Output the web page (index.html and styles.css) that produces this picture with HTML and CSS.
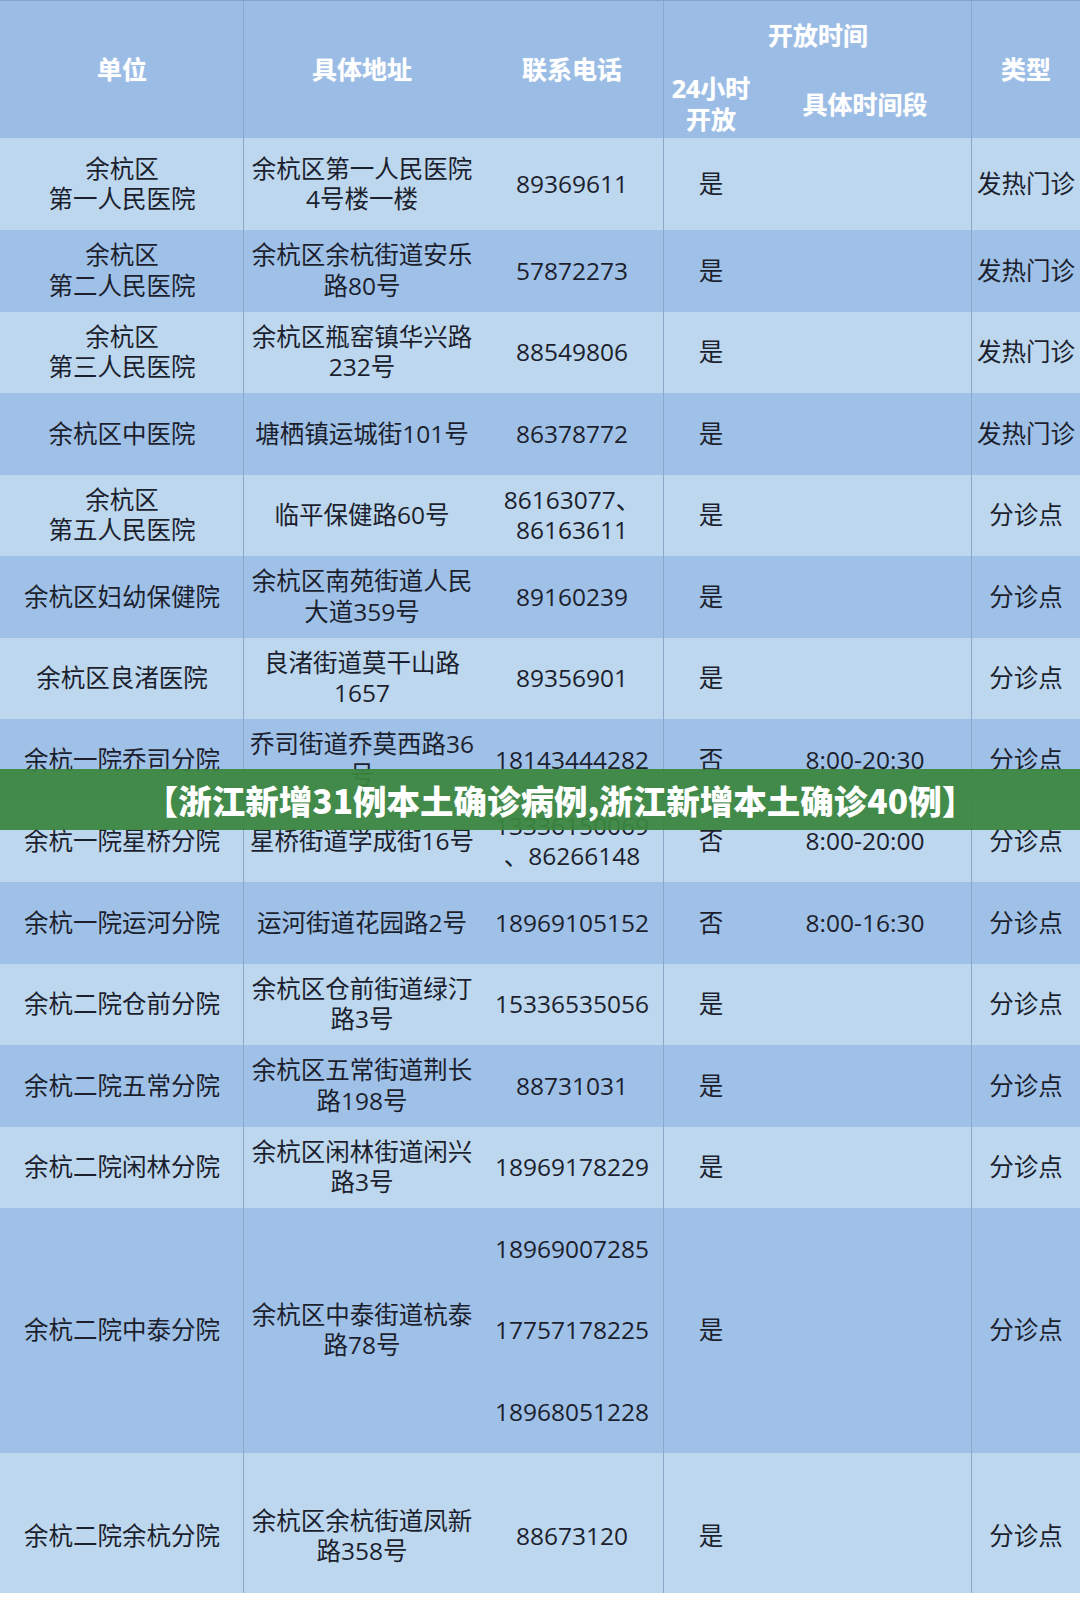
FILE: index.html
```html
<!DOCTYPE html>
<html lang="zh-CN">
<head>
<meta charset="utf-8">
<title>余杭区发热门诊及分诊点</title>
<link rel="stylesheet" href="styles.css">
</head>
<body>
<div class="page">
<table class="sheet">
<colgroup>
<col class="c-unit"><col class="c-addr"><col class="c-tel"><col class="c-24"><col class="c-time"><col class="c-type">
</colgroup>
<thead>
<tr class="h1">
<th rowspan="2" class="vl">单位</th>
<th rowspan="2">具体地址</th>
<th rowspan="2" class="vl">联系电话</th>
<th colspan="2" class="vl">开放时间</th>
<th rowspan="2">类型</th>
</tr>
<tr class="h2">
<th>24小时<br>开放</th>
<th class="vl">具体时间段</th>
</tr>
</thead>
<tbody>
<tr class="light first"><td class="vl">余杭区<br>第一人民医院</td><td>余杭区第一人民医院<br>4号楼一楼</td><td class="vl">89369611</td><td>是</td><td class="vl"></td><td>发热门诊</td></tr>
<tr class="dark"><td class="vl">余杭区<br>第二人民医院</td><td>余杭区余杭街道安乐<br>路80号</td><td class="vl">57872273</td><td>是</td><td class="vl"></td><td>发热门诊</td></tr>
<tr class="light"><td class="vl">余杭区<br>第三人民医院</td><td>余杭区瓶窑镇华兴路<br>232号</td><td class="vl">88549806</td><td>是</td><td class="vl"></td><td>发热门诊</td></tr>
<tr class="dark"><td class="vl">余杭区中医院</td><td>塘栖镇运城街101号</td><td class="vl">86378772</td><td>是</td><td class="vl"></td><td>发热门诊</td></tr>
<tr class="light"><td class="vl">余杭区<br>第五人民医院</td><td>临平保健路60号</td><td class="vl">86163077、<br>86163611</td><td>是</td><td class="vl"></td><td>分诊点</td></tr>
<tr class="dark"><td class="vl">余杭区妇幼保健院</td><td>余杭区南苑街道人民<br>大道359号</td><td class="vl">89160239</td><td>是</td><td class="vl"></td><td>分诊点</td></tr>
<tr class="light"><td class="vl">余杭区良渚医院</td><td>良渚街道莫干山路<br>1657</td><td class="vl">89356901</td><td>是</td><td class="vl"></td><td>分诊点</td></tr>
<tr class="dark"><td class="vl">余杭一院乔司分院</td><td>乔司街道乔莫西路36<br>号</td><td class="vl">18143444282</td><td>否</td><td class="vl">8:00-20:30</td><td>分诊点</td></tr>
<tr class="light"><td class="vl">余杭一院星桥分院</td><td>星桥街道学成街16号</td><td class="vl">13336150069<br>、86266148</td><td>否</td><td class="vl">8:00-20:00</td><td>分诊点</td></tr>
<tr class="dark"><td class="vl">余杭一院运河分院</td><td>运河街道花园路2号</td><td class="vl">18969105152</td><td>否</td><td class="vl">8:00-16:30</td><td>分诊点</td></tr>
<tr class="light"><td class="vl">余杭二院仓前分院</td><td>余杭区仓前街道绿汀<br>路3号</td><td class="vl">15336535056</td><td>是</td><td class="vl"></td><td>分诊点</td></tr>
<tr class="dark"><td class="vl">余杭二院五常分院</td><td>余杭区五常街道荆长<br>路198号</td><td class="vl">88731031</td><td>是</td><td class="vl"></td><td>分诊点</td></tr>
<tr class="light"><td class="vl">余杭二院闲林分院</td><td>余杭区闲林街道闲兴<br>路3号</td><td class="vl">18969178229</td><td>是</td><td class="vl"></td><td>分诊点</td></tr>
<tr class="dark tall"><td class="vl">余杭二院中泰分院</td><td>余杭区中泰街道杭泰<br>路78号</td><td class="vl multi-cell"><div class="multi"><div class="sub">18969007285</div><div class="sub">17757178225</div><div class="sub">18968051228</div></div></td><td>是</td><td class="vl"></td><td>分诊点</td></tr>
<tr class="light last"><td class="vl">余杭二院余杭分院</td><td>余杭区余杭街道凤新<br>路358号</td><td class="vl">88673120</td><td>是</td><td class="vl"></td><td>分诊点</td></tr>
</tbody>
</table>
<div class="banner">【浙江新增31例本土确诊病例,浙江新增本土确诊40例】</div>
</div>
</body>
</html>
```

FILE: styles.css
```css
html, body {
  margin: 0;
  padding: 0;
  background: #ffffff;
}

.page {
  position: relative;
  width: 1080px;
  height: 1598px;
  overflow: hidden;
}

.sheet {
  width: 1080px;
  table-layout: fixed;
  border-collapse: separate;
  border-spacing: 0;
  border-top: 1px solid #86a3c7;
  font-family: "Open Sans", "Noto Sans CJK SC", sans-serif;
  font-size: 24.5px;
  line-height: 30.5px;
  color: #1c1f2e;
}

.c-unit { width: 244px; }
.c-addr { width: 236px; }
.c-tel  { width: 184px; }
.c-24   { width: 94px; }
.c-time { width: 214px; }
.c-type { width: 108px; }

.sheet th,
.sheet td {
  padding: 0;
  text-align: center;
  vertical-align: middle;
  white-space: nowrap;
}

.sheet th {
  background: #9bbde5;
  color: #ffffff;
  font-family: "Open Sans", "Noto Sans CJK SC", sans-serif;
  font-weight: 700;
  font-size: 25px;
  text-shadow: 0 0 1px rgba(255, 255, 255, 0.6);
}

.h1, .h2 { height: 68.5px; }

.sheet .vl { box-shadow: inset -1px 0 0 #8ca7ca; }

.light td { background: #bdd7ef; }
.dark td  { background: #a0c1e7; }

tbody tr { height: 81.5px; }
tbody tr.first { height: 92px; }
tbody tr.tall { height: 244.5px; }
tbody tr.last { height: 140px; }
tbody tr.last td { padding-top: 27px; }

.multi-cell { height: 244.5px; }

.multi {
  display: flex;
  flex-direction: column;
}

.sub {
  height: 81.5px;
  display: flex;
  align-items: center;
  justify-content: center;
}

.banner {
  position: absolute;
  left: 0;
  top: 769px;
  width: 1080px;
  height: 61px;
  display: flex;
  align-items: center;
  justify-content: center;
  padding-left: 40px;
  box-sizing: border-box;
  background: rgba(58, 134, 64, 0.94);
  color: #ffffff;
  font-family: "Noto Sans CJK SC", sans-serif;
  font-weight: 900;
  font-size: 33.5px;
  letter-spacing: 0;
}
```
